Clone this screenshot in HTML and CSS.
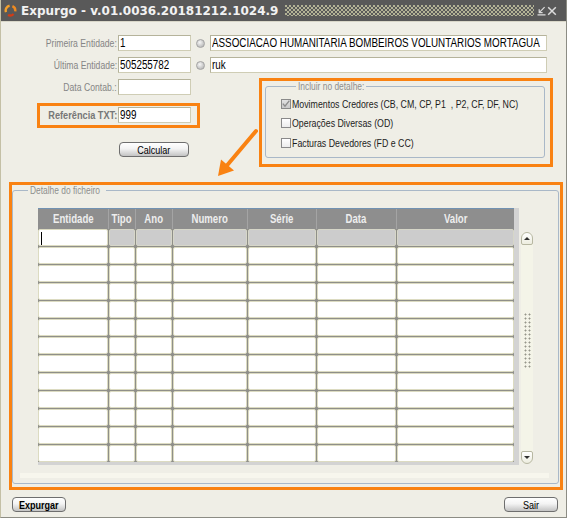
FILE: index.html
```html
<!DOCTYPE html>
<html lang="pt">
<head>
<meta charset="utf-8">
<title>Expurgo</title>
<link rel="stylesheet" href="styles.css">
</head>
<body>
<div class="window">
  <div class="titlebar">
    <svg class="app-icon" width="13" height="13" viewBox="0 0 13 13">
      <path d="M2 8.2 A4.8 4.8 0 0 1 5.6 1.8" fill="none" stroke="#f5a12a" stroke-width="2.4"/>
      <path d="M8.4 2.2 A4.8 4.8 0 0 1 11.2 7.4" fill="none" stroke="#ef8a20" stroke-width="2.4"/>
      <path d="M9.6 10 A4.8 4.8 0 0 1 4 11" fill="none" stroke="#d23c16" stroke-width="2.4"/>
    </svg>
    <span class="title">Expurgo - v.01.0036.20181212.1024.9</span>
    <div class="bumps"></div>
    <svg class="tb-icon min" width="9" height="10" viewBox="0 0 9 10">
      <path d="M7.6 1.2 L2.2 6.6 M2.2 3.2 V6.6 H5.6 M0.5 8.8 H8.5" fill="none" stroke="#dcdcdc" stroke-width="1.2"/>
    </svg>
    <svg class="tb-icon close" width="10" height="10" viewBox="0 0 10 10">
      <path d="M1.2 1.2 L8.8 8.8 M8.8 1.2 L1.2 8.8" fill="none" stroke="#dcdcdc" stroke-width="1.5"/>
    </svg>
  </div>

  <div class="content">
    <div class="row first">
      <span class="lbl"><span class="nx r">Primeira Entidade:</span></span>
      <div class="inp"><span class="nx">1</span></div>
      <span class="radio"></span>
      <div class="inp wide"><span class="nx">ASSOCIACAO HUMANITARIA BOMBEIROS VOLUNTARIOS MORTAGUA</span></div>
    </div>
    <div class="row second">
      <span class="lbl"><span class="nx r">Última Entidade:</span></span>
      <div class="inp"><span class="nx">505255782</span></div>
      <span class="radio"></span>
      <div class="inp wide"><span class="nx">ruk</span></div>
    </div>

    <div class="lower">
      <div class="left-col">
        <div class="row third">
          <span class="lbl"><span class="nx r">Data Contab.:</span></span>
          <div class="inp"></div>
        </div>
        <div class="hl ref-box">
          <span class="lbl ref-lbl"><span class="nx r">Referência TXT:</span></span>
          <div class="inp"><span class="nx">999</span></div>
        </div>
        <button class="btn calc"><span class="nx c">Calcular</span></button>
      </div>
      <div class="hl incl-box">
        <fieldset class="group incl">
          <legend><span class="nx">Incluir no detalhe:</span></legend>
          <div class="chk-row"><span class="chk checked"><svg width="8" height="8" viewBox="0 0 8 8"><path d="M0.8 3.6 L3 6.2 L7.4 0.6" fill="none" stroke="#8c8c8c" stroke-width="1.4"/></svg></span><span class="nx">Movimentos Credores (CB, CM, CP, P1&nbsp; , P2, CF, DF, NC)</span></div>
          <div class="chk-row"><span class="chk"></span><span class="nx">Operações Diversas (OD)</span></div>
          <div class="chk-row"><span class="chk"></span><span class="nx">Facturas Devedores (FD e CC)</span></div>
        </fieldset>
      </div>
    </div>

    <div class="hl detail-box">
      <fieldset class="group detail">
        <legend><span class="nx">Detalhe do ficheiro</span></legend>
        <div class="grid-area">
          <div class="grid-wrap">
            <div class="grid-head">
              <div class="hcell"><span class="nx c">Entidade</span></div>
              <div class="hcell"><span class="nx c">Tipo</span></div>
              <div class="hcell"><span class="nx c">Ano</span></div>
              <div class="hcell"><span class="nx c">Numero</span></div>
              <div class="hcell"><span class="nx c">Série</span></div>
              <div class="hcell"><span class="nx c">Data</span></div>
              <div class="hcell"><span class="nx c">Valor</span></div>
            </div>
            <div class="grid-body">
              <div class="cell cur"><span class="caret"></span></div><div class="cell dis"></div><div class="cell dis"></div><div class="cell dis"></div><div class="cell dis"></div><div class="cell dis"></div><div class="cell dis"></div>
              <div class="cell"></div><div class="cell"></div><div class="cell"></div><div class="cell"></div><div class="cell"></div><div class="cell"></div><div class="cell"></div>
              <div class="cell"></div><div class="cell"></div><div class="cell"></div><div class="cell"></div><div class="cell"></div><div class="cell"></div><div class="cell"></div>
              <div class="cell"></div><div class="cell"></div><div class="cell"></div><div class="cell"></div><div class="cell"></div><div class="cell"></div><div class="cell"></div>
              <div class="cell"></div><div class="cell"></div><div class="cell"></div><div class="cell"></div><div class="cell"></div><div class="cell"></div><div class="cell"></div>
              <div class="cell"></div><div class="cell"></div><div class="cell"></div><div class="cell"></div><div class="cell"></div><div class="cell"></div><div class="cell"></div>
              <div class="cell"></div><div class="cell"></div><div class="cell"></div><div class="cell"></div><div class="cell"></div><div class="cell"></div><div class="cell"></div>
              <div class="cell"></div><div class="cell"></div><div class="cell"></div><div class="cell"></div><div class="cell"></div><div class="cell"></div><div class="cell"></div>
              <div class="cell"></div><div class="cell"></div><div class="cell"></div><div class="cell"></div><div class="cell"></div><div class="cell"></div><div class="cell"></div>
              <div class="cell"></div><div class="cell"></div><div class="cell"></div><div class="cell"></div><div class="cell"></div><div class="cell"></div><div class="cell"></div>
              <div class="cell"></div><div class="cell"></div><div class="cell"></div><div class="cell"></div><div class="cell"></div><div class="cell"></div><div class="cell"></div>
              <div class="cell"></div><div class="cell"></div><div class="cell"></div><div class="cell"></div><div class="cell"></div><div class="cell"></div><div class="cell"></div>
              <div class="cell"></div><div class="cell"></div><div class="cell"></div><div class="cell"></div><div class="cell"></div><div class="cell"></div><div class="cell"></div>
            </div>
          </div>
          <div class="vscroll">
            <span class="sb-btn up"><span class="tri-up"></span></span>
            <span class="grip"></span>
            <span class="sb-btn down"><span class="tri-down"></span></span>
          </div>
        </div>
        <div class="hstrip"></div>
      </fieldset>
    </div>

    <div class="footer">
      <button class="btn bold"><span class="nx c">Expurgar</span></button>
      <button class="btn"><span class="nx c">Sair</span></button>
    </div>
  </div>

  <svg class="arrow" width="567" height="518" viewBox="0 0 567 518">
    <line x1="256" y1="131" x2="226.5" y2="166" stroke="#f98212" stroke-width="4" stroke-linecap="round"/>
    <polygon points="218,176 221,159.5 234,170.5" fill="#f98212"/>
  </svg>
</div>
</body>
</html>
```

FILE: styles.css
```css
body {
  margin: 0;
  background: #ffffff;
}

.window {
  position: relative;
  width: 567px;
  height: 518px;
  box-sizing: border-box;
  background: #efeee6;
  border-left: 1px solid #c4c0a6;
  border-right: 1px solid #8c8c84;
  border-bottom: 1px solid #8c8c84;
  overflow: hidden;
  font-family: "Liberation Sans", Arial, sans-serif;
}

/* horizontally condensed text (narrow face) */
.nx {
  display: inline-block;
  white-space: nowrap;
  transform: scaleX(0.8);
  transform-origin: left center;
}

.nx.r {
  transform-origin: right center;
}

.nx.c {
  transform-origin: center center;
}

/* title bar */
.titlebar {
  height: 21px;
  display: flex;
  align-items: center;
  background: #595959;
  padding: 0 9px 0 3px;
  border-bottom: 1px solid #d9d7c9;
}

.app-icon {
  flex: none;
}

.title {
  margin-left: 4px;
  font-family: "DejaVu Sans", Verdana, sans-serif;
  font-weight: bold;
  font-size: 12px;
  color: #f2f2f2;
  white-space: nowrap;
  line-height: 14px;
  padding-top: 1px;
}

.bumps {
  flex: 1;
  height: 11px;
  margin-left: 7px;
  background-image:
    radial-gradient(circle at 1px 1px, #b3b396 0.8px, transparent 1.2px),
    radial-gradient(circle at 1px 1px, #b3b396 0.8px, transparent 1.2px);
  background-size: 4px 4px, 4px 4px;
  background-position: 0 0, 2px 2px;
}

.tb-icon {
  flex: none;
}

.tb-icon.min {
  margin-left: 3px;
}

.tb-icon.close {
  margin-left: 1px;
}

/* form */
.content {
  padding-top: 13px;
}

.row {
  display: flex;
  align-items: center;
  height: 16px;
}

.row.second {
  margin-top: 6px;
}

.row.third {
  margin-top: 1px;
}

.lbl {
  flex: none;
  display: flex;
  justify-content: flex-end;
  width: 116px;
  font-size: 10.8px;
  color: #858585;
  white-space: nowrap;
}

.inp {
  flex: none;
  box-sizing: border-box;
  height: 16px;
  width: 73px;
  margin-left: 1px;
  background: #ffffff;
  border: 1px solid #cfcdb5;
  border-top-color: #b5b39b;
  border-left-color: #b5b39b;
  font-size: 12.3px;
  line-height: 14px;
  padding: 0 1px;
  color: #000000;
  white-space: nowrap;
  overflow: hidden;
}

.radio {
  flex: none;
  box-sizing: border-box;
  width: 9px;
  height: 9px;
  margin-left: 5px;
  border-radius: 50%;
  border: 1px solid #a3a3a3;
  background: radial-gradient(circle at 40% 35%, #f6f6f6, #bcbcbc 75%);
}

.inp.wide {
  width: 337px;
  margin-left: 5px;
}

.lower {
  display: flex;
  margin-top: 5px;
}

.left-col {
  width: 258px;
}

.hl {
  box-sizing: border-box;
  border: 3px solid #f98212;
}

.ref-box {
  display: flex;
  align-items: flex-start;
  width: 163px;
  height: 25px;
  margin: 8px 0 0 36px;
  padding-top: 1px;
}

.ref-lbl {
  width: 77px;
  font-weight: bold;
  font-size: 11.5px;
  color: #777777;
  line-height: 16px;
}

.btn {
  box-sizing: border-box;
  height: 15px;
  padding: 0;
  border: 1px solid #6e6e6e;
  border-radius: 4px;
  background: linear-gradient(#ffffff, #f3f3f3 45%, #c3c3c3);
  font-family: "Liberation Sans", Arial, sans-serif;
  font-size: 11.3px;
  line-height: 12px;
  color: #000000;
  overflow: visible;
}

.btn.bold {
  font-weight: bold;
}

.calc {
  display: block;
  width: 70px;
  margin: 14px 0 0 118px;
}

.incl-box {
  display: flex;
  flex-direction: column;
  width: 294px;
  height: 89px;
}

.group {
  margin: 0;
  padding: 0;
  min-width: 0;
  border: 1px solid #a9b8c8;
  border-radius: 3px;
}

.group legend {
  box-sizing: content-box;
  margin-left: 15px;
  padding: 0 2px;
  font-size: 10.5px;
  line-height: 10px;
  color: #8e8e8e;
  white-space: nowrap;
}

.incl legend {
  width: 66px;
}

.detail legend {
  width: 74px;
}

.incl {
  flex: 1;
  margin: 0 5px 6px 3px;
  padding: 3px 0 0 15px;
}

.chk-row {
  display: flex;
  align-items: center;
  height: 19.5px;
  font-size: 11px;
  color: #1c1c1c;
  white-space: nowrap;
}

.chk {
  flex: none;
  box-sizing: border-box;
  width: 10px;
  height: 10px;
  margin-right: 1px;
  border: 1px solid #8a8a8a;
  background: linear-gradient(#ffffff, #ececec);
  display: flex;
  align-items: center;
  justify-content: center;
}

.chk.checked {
  background: linear-gradient(#e2e2e2, #c8c8c8);
}

/* detail */
.detail-box {
  display: flex;
  flex-direction: column;
  width: 554px;
  height: 308px;
  margin: 15px 0 0 8px;
}

.detail {
  flex: 1;
  margin: 0 1px 3px 0;
  padding: 0 0 5px 0;
}

.grid-area {
  display: flex;
  margin: 13px 0 0 25px;
}

.grid-wrap {
  background: #d3d3d3;
  padding: 0 5px 3px 0;
}

.grid-head,
.grid-body {
  display: grid;
  grid-template-columns: 70px 26px 36px 74px 68px 79px 117px;
  column-gap: 1px;
}

.grid-head {
  box-sizing: border-box;
  height: 21px;
  background: #a4a4a4;
  border-top: 1px solid #7292b2;
}

.hcell {
  display: flex;
  align-items: center;
  justify-content: center;
  background: #8e8e8e;
  color: #ededed;
  font-weight: bold;
  font-size: 12px;
}

.grid-body {
  grid-auto-rows: 17px;
  row-gap: 1px;
  background: #8f8f89;
}

.cell {
  box-sizing: border-box;
  background: #ffffff;
  border: 1px solid #dcdbc1;
  border-radius: 2px;
}

.cell.dis {
  background: #cccccc;
  border-color: #d6d6c8;
}

.cell.cur {
  padding: 2px 0 0 2px;
}

.caret {
  display: block;
  width: 1px;
  height: 13px;
  background: #000000;
}

.vscroll {
  box-sizing: border-box;
  width: 12px;
  height: 232px;
  margin: 24px 0 0 2px;
  background: #f4f4e8;
  border-radius: 6px;
  display: flex;
  flex-direction: column;
  justify-content: space-between;
  align-items: center;
}

.sb-btn {
  box-sizing: border-box;
  width: 12px;
  height: 13px;
  border: 1px solid #b7b7a2;
  background: linear-gradient(#ffffff, #ededdf);
  display: flex;
  align-items: center;
  justify-content: center;
}

.sb-btn.up {
  border-radius: 6px 6px 2px 2px;
}

.sb-btn.down {
  border-radius: 2px 2px 6px 6px;
}

.tri-up {
  width: 0;
  height: 0;
  border-left: 3px solid transparent;
  border-right: 3px solid transparent;
  border-bottom: 3px solid #303030;
}

.tri-down {
  width: 0;
  height: 0;
  border-left: 3px solid transparent;
  border-right: 3px solid transparent;
  border-top: 3px solid #303030;
}

.grip {
  width: 7px;
  height: 56px;
  margin-bottom: 14px;
  background-image: radial-gradient(circle at 1.5px 1.5px, #96968a 0.8px, transparent 1.2px);
  background-size: 4px 4px;
}

.hstrip {
  margin: 8px 0 0 7px;
  width: 529px;
  height: 5px;
  background: #f7f6ed;
}

.footer {
  display: flex;
  justify-content: space-between;
  margin-top: 7px;
  padding: 0 8px 0 11px;
}

.footer .btn {
  width: 54px;
}

.arrow {
  position: absolute;
  left: -1px;
  top: 0;
  pointer-events: none;
}
```
